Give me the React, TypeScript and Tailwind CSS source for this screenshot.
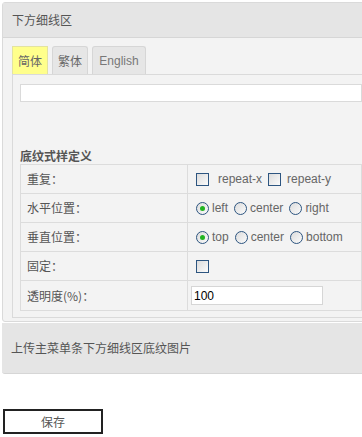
import React from 'react';

const cn = '"Noto Sans CJK SC", "Liberation Sans", sans-serif';
const en = '"Liberation Sans", Arial, sans-serif';

function Box() {
  return (
    <span className="inline-block w-[13px] h-[13px] border border-[#2d5580] bg-gradient-to-br from-[#dcdcdc] to-[#fbfbfb] shrink-0" />
  );
}

function Radio({ checked = false }: { checked?: boolean }) {
  return (
    <span className="inline-flex items-center justify-center w-[13px] h-[13px] rounded-full border border-[#2d5580] bg-gradient-to-br from-[#dcdcdc] to-[#fbfbfb] shrink-0">
      {checked && <span className="w-[5px] h-[5px] rounded-full bg-[#22b422]" />}
    </span>
  );
}

function Row({ label, children, last = false }: { label: string; children: React.ReactNode; last?: boolean }) {
  return (
    <div className={`flex h-[29px] ${last ? '' : 'border-b border-[#dcdcdc]'}`}>
      <div className="w-[167px] border-r border-[#dcdcdc] pl-[6px] flex items-center text-[12px] text-[#555]" style={{ fontFamily: cn }}>
        {label}
      </div>
      <div className="flex-1 flex items-center pl-[8px] text-[12px] text-[#666]" style={{ fontFamily: en }}>
        {children}
      </div>
    </div>
  );
}

export default function App() {
  return (
    <div className="w-[362px] h-[437px] overflow-hidden bg-white">
      <div className="pt-[2px] pl-[2px] w-[380px]">
        <div className="border border-[#dadada] rounded-[3px] bg-[#f3f3f3]">
          <div className="h-[35px] bg-[#e5e5e5] border-b border-[#d6d6d6] flex items-center pl-[9px] text-[12px] text-[#555]" style={{ fontFamily: cn }}>
            下方细线区
          </div>
          <div className="px-[9px] pt-[8px] pb-[3px]">
            <div className="flex gap-[4px] items-end h-[28px]">
              <div className="h-[28px] w-[36px] bg-[#ffff8c] border border-[#e3e3a0] border-b-0 flex items-center justify-center text-[12px] text-[#666]" style={{ fontFamily: cn }}>
                简体
              </div>
              <div className="h-[28px] w-[36px] bg-[#e6e6e6] border border-[#d6d6d6] border-b-0 rounded-t-[3px] flex items-center justify-center text-[12px] text-[#666]" style={{ fontFamily: cn }}>
                繁体
              </div>
              <div className="h-[28px] w-[54px] bg-[#e6e6e6] border border-[#d6d6d6] border-b-0 rounded-t-[3px] flex items-center justify-center text-[12px] text-[#777]" style={{ fontFamily: en }}>
                English
              </div>
            </div>
            <div className="border border-[#dadada] px-[7px] pt-[9px] pb-[6px]">
              <div className="h-[18px] bg-white border border-[#dadada]" />
              <div className="h-[46px]" />
              <div className="text-[12px] font-bold text-[#555] h-[16px] leading-[16px]" style={{ fontFamily: cn }}>
                底纹式样定义
              </div>
              <div className="border border-[#dcdcdc]">
                <Row label="重复：">
                  <Box />
                  <span className="ml-[9px]">repeat-x</span>
                  <span className="ml-[6px] flex"><Box /></span>
                  <span className="ml-[6px]">repeat-y</span>
                </Row>
                <Row label="水平位置：">
                  <Radio checked />
                  <span className="ml-[3px]">left</span>
                  <span className="ml-[6px] flex"><Radio /></span>
                  <span className="ml-[3px]">center</span>
                  <span className="ml-[6px] flex"><Radio /></span>
                  <span className="ml-[3px]">right</span>
                </Row>
                <Row label="垂直位置：">
                  <Radio checked />
                  <span className="ml-[3px]">top</span>
                  <span className="ml-[6px] flex"><Radio /></span>
                  <span className="ml-[3px]">center</span>
                  <span className="ml-[6px] flex"><Radio /></span>
                  <span className="ml-[3px]">bottom</span>
                </Row>
                <Row label="固定：">
                  <Box />
                </Row>
                <Row label="透明度(%)：" last>
                  <div className="-ml-[5px] w-[132px] h-[19px] bg-white border border-[#d6d6d6] flex items-center pl-[2px] text-[12px] text-black" style={{ fontFamily: en }}>
                    100
                  </div>
                </Row>
              </div>
            </div>
          </div>
        </div>
        <div className="mt-[1px] h-[51px] bg-[#e5e5e5] border-b border-[#d6d6d6] rounded-b-[3px] flex items-center pl-[9px] text-[12px] text-[#555]" style={{ fontFamily: cn }}>
          上传主菜单条下方细线区底纹图片
        </div>
        <div className="mt-[35px] ml-[1px] w-[100px] h-[25px] border-2 border-[#222] bg-white flex items-center justify-center text-[12px] text-[#555]" style={{ fontFamily: cn }}>
          保存
        </div>
      </div>
    </div>
  );
}
